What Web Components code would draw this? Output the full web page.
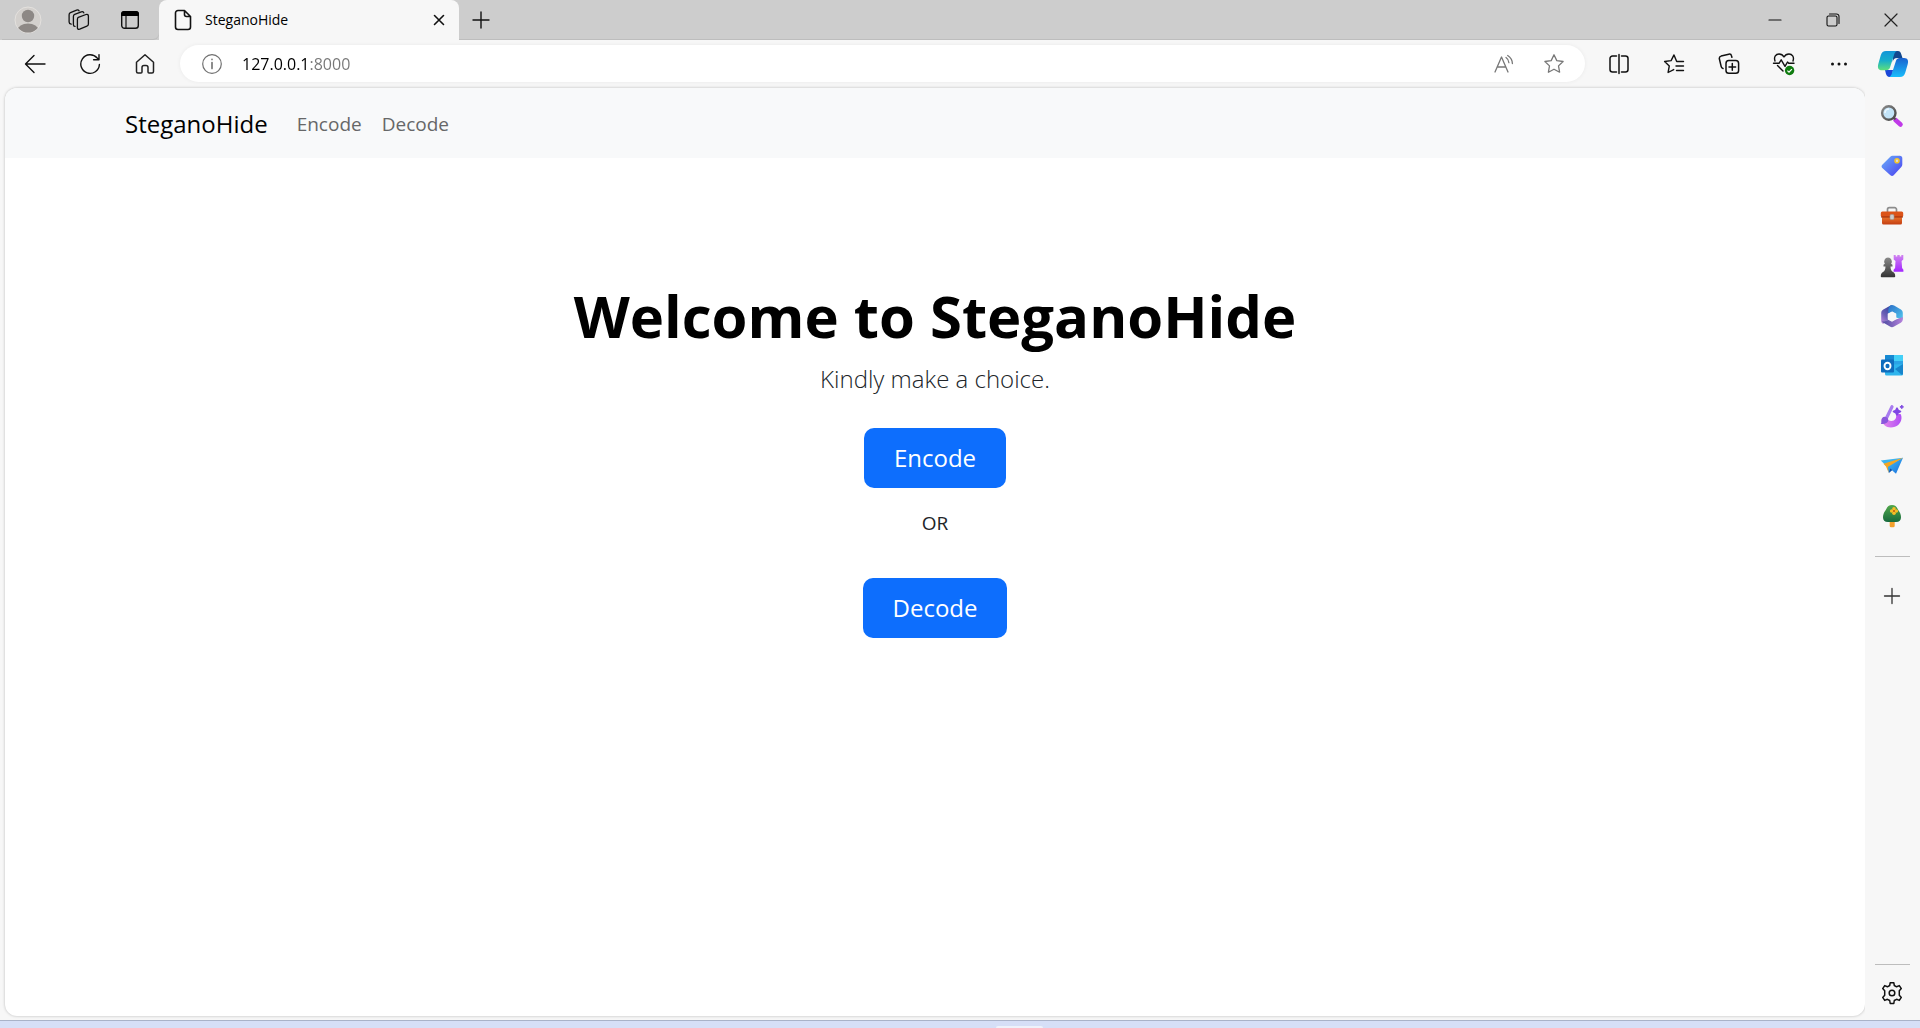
<!DOCTYPE html>
<html lang="en">
<head>
<meta charset="utf-8">
<title>SteganoHide</title>
<style>
html, body { margin: 0; height: 100%; }
body { font-family: "Open Sans", "Noto Sans", sans-serif; color: #000; background: #f7f7f7; }
</style>
</head>
<body>
<browser-window>
  <tab-strip slot="tabs" label="SteganoHide"></tab-strip>
  <tool-bar slot="tools"></tool-bar>
  <site-page slot="page">
    <site-nav slot="nav" brand="SteganoHide">
      <a href="#encode">Encode</a>
      <a href="#decode">Decode</a>
    </site-nav>
    <welcome-panel>
      <span slot="title">Welcome to SteganoHide</span>
      <span slot="lead">Kindly make a choice.</span>
      <action-button slot="first">Encode</action-button>
      <span slot="or">OR</span>
      <action-button slot="second">Decode</action-button>
    </welcome-panel>
  </site-page>
  <side-bar slot="side"></side-bar>
</browser-window>

<script>
const line = (w, body, sw = 1.4, color = '#111') =>
  [w, `<g fill="none" stroke="${color}" stroke-width="${sw}" stroke-linecap="round" stroke-linejoin="round">${body}</g>`];
const full = (w, body) => [w, body];

/* Each glyph: [size in px, markup]; the viewBox equals the size. */
const ICONS = {
  avatar: full(28, `<defs><clipPath id="c"><circle cx="14" cy="14" r="12.6"/></clipPath></defs><circle cx="14" cy="14" r="13" fill="#d3d0cd" stroke="#e4e1de"/><g fill="#8d8885" clip-path="url(#c)"><circle cx="14" cy="10" r="6.2"/><ellipse cx="14" cy="24" rx="10.4" ry="6.4"/></g>`),
  spaces: line(24, `<path d="M11.300 9.400l7.700-2.900c1.400-.4 2.400.3 2.400 1.600v8c0 1-.5 1.800-1.500 2.100l-7.200 3c-1.300.4-2.300-.2-2.300-1.500v-8.300c0-1 .2-1.600.9-2z"/><path d="M8 18.400c-1 0-1.600-.6-1.600-1.600V8.400c0-1 .4-1.700 1.300-2.100l6.600-2.500c1.100-.3 2 0 2.500 1"/><path d="M4.200 16.200c-1.300-.2-2.100-1-2.100-2.200V6.700c0-1 .5-1.700 1.400-2.100L9.600 2.100c1-.3 2 0 2.500.8"/>`, 1.3),
  tabsmenu: full(20, `<rect x="1.700" y="1.700" width="16.600" height="16.600" rx="2.800" fill="none" stroke="#111" stroke-width="1.400"/><path d="M1 6V4a3 3 0 0 1 3-3h12a3 3 0 0 1 3 3v2z" fill="#000"/><path d="M6 6v12" stroke="#111" stroke-width="1.200"/>`),
  file: line(22, `<path d="M12.500 1.500H6A2.500 2.500 0 0 0 3.500 4v14A2.500 2.500 0 0 0 6 20.500h10a2.500 2.500 0 0 0 2.500-2.500V7.500zM12.500 1.500v4a2 2 0 0 0 2 2h4"/>`, 1.6),
  x: line(14, `<path d="M2.500 2.500l9 9M11.500 2.500l-9 9"/>`, 1.6),
  plus: line(20, `<path d="M10 2v16M2 10h16"/>`, 1.4),
  min: line(14, `<path d="M1 7h12"/>`, 1.2),
  max: line(14, `<rect x="1" y="3" width="10" height="10" rx="1.500"/><path d="M3.500 1H10.500A2.500 2.500 0 0 1 13 3.500V10.500"/>`, 1.1),
  close: line(14, `<path d="M1 1l12 12M13 1L1 13"/>`, 1.2, '#222'),
  back: line(22, `<path d="M21 11H2M10 2.500L1.500 11l8.500 8.500"/>`, 1.4),
  reload: line(22, `<path d="M20.400 11.500A9.300 9.300 0 1 1 18.200 5l1.600 1.500M20 1.600v5.200h-5.400"/>`, 1.4),
  home: line(22, `<path d="M2.500 9.200L11 1.800l8.500 7.400v9.300a1.500 1.500 0 0 1-1.500 1.500h-3a1 1 0 0 1-1-1v-4.500a2 2 0 0 0-2-2h-2a2 2 0 0 0-2 2V19a1 1 0 0 1-1 1H4a1.500 1.500 0 0 1-1.500-1.500z"/>`, 1.5, '#222'),
  info: line(22, `<circle cx="11" cy="11" r="9.300"/><path d="M11 9.600v6M11 6.400v.2" stroke-width="1.600"/>`, 1.2, '#707070'),
  read: line(22, `<path d="M2 19L8.500 4 15 19M4.300 14h8.400"/><path d="M13 4.500c1.800 1.200 2.800 3 2.900 5.200M14.700 2.500c3 2 4.600 4.600 4.700 8"/>`, 1.3, '#777'),
  star: line(22, `<path d="M11 1.800l2.800 5.800 6.300.9-4.600 4.400 1.100 6.300L11 16.200l-5.600 3 1.100-6.300L1.900 8.500l6.300-.9z"/>`, 1.3, '#777'),
  split: line(22, `<path d="M8.500 3H4.500A2.500 2.500 0 0 0 2 5.500v11A2.500 2.500 0 0 0 4.500 19h4M13.500 3h4A2.500 2.500 0 0 1 20 5.500v11a2.500 2.500 0 0 1-2.500 2.500h-4M11 1.500v19"/>`, 1.5),
  favs: line(22, `<path d="M20.500 8.500h-6.800L11 1.900 8.100 7.600l-6.500.9 4.700 4.400-1.200 6.600 5.600-2.900M13 13h7.500M13.500 17.500h7"/>`, 1.4),
  collect: line(22, `<rect x="8" y="7.600" width="12.600" height="12.600" rx="2.800"/><path d="M14.300 10.600v6.600M11 13.900h6.600M5 15.500c-1-.2-1.600-.8-1.800-1.800L1.400 6c-.3-1.400.4-2.500 1.700-2.900l7.700-1.900c1.300-.3 2.400.4 2.700 1.600l.4 1.400"/>`, 1.5),
  health: full(24, `<g fill="none" stroke="#111" stroke-width="1.400" stroke-linecap="round" stroke-linejoin="round"><path d="M3 9C1.500 4.500 4 2 7 2c2.300 0 4 1.200 5 3 1-1.800 2.700-3 5-3 3 0 5.500 2.500 4 7M5.500 13.500l5.500 5.500M1.500 11.300H7l2.200-3.500 3.800 6.500 2.500-4.300 1.200 1.300h5.300"/></g><circle cx="17.600" cy="18.500" r="4.700" fill="#107c10"/><path d="M15.400 18.600l1.600 1.500 2.900-3" fill="none" stroke="#fff" stroke-width="1.200"/>`),
  dots: full(18, `<g fill="#111"><circle cx="2.500" cy="9" r="1.500"/><circle cx="9" cy="9" r="1.500"/><circle cx="15.500" cy="9" r="1.500"/></g>`),
  copilot: full(32, `<defs><linearGradient id="a" x1="0" y1="0" x2="0" y2="1"><stop offset="0" stop-color="#1295d8"/><stop offset=".5" stop-color="#18aecb"/><stop offset="1" stop-color="#5fe07b"/></linearGradient><linearGradient id="b" x1="0" y1="0" x2="0" y2="1"><stop offset="0" stop-color="#1a62cf"/><stop offset="1" stop-color="#19bdfb"/></linearGradient></defs><path d="M16 3h5c1.600 0 2.700 1 3.200 3l1.300 4h-5.200c-3 0-4 1.200-4.600 4z" fill="#12488f"/><path d="M8 22h8l-1 7h-2.500c-2 0-3-1.500-3.600-3.500z" fill="#1b47d8"/><path d="M9 3h11c-1.600.5-2.400 2-3 4l-4 12.500c-.6 1.800-2 2.800-3.600 2.800H5c-4 0-4.600-3-3.700-6.300l2.400-8.500C4.600 4.400 6.300 3 9 3z" fill="url(#a)"/><path d="M23 29H12c1.600-.5 2.400-2 3-4l4-12.300c.6-1.800 2-2.700 3.600-2.700H27c4 0 4.600 3 3.700 6.300l-2.400 8.200C27.400 27.600 25.700 29 23 29z" fill="url(#b)"/>`),
  search: full(24, `<defs><linearGradient id="a" x1="0" y1="0" x2="1" y2="1"><stop offset="0" stop-color="#8a8a8a"/><stop offset="1" stop-color="#444"/></linearGradient></defs><path d="M15.500 16l5 4.500" stroke="#c03ae8" stroke-width="4.600" stroke-linecap="round"/><path d="M13.500 13.500l2 2" stroke="#555" stroke-width="2"/><circle cx="8.800" cy="9" r="6.700" fill="#c3e4f8" stroke="url(#a)" stroke-width="2.400"/><path d="M5 9a4 4 0 0 1 4-4" stroke="#eef8ff" stroke-width="1.500" fill="none"/>`),
  tag: full(24, `<defs><linearGradient id="a" x1="0" y1="0" x2="1" y2="1"><stop offset="0" stop-color="#6bb1f8"/><stop offset="1" stop-color="#4a3df0"/></linearGradient></defs><path d="M12.500 1.700h7.300a2.500 2.500 0 0 1 2.500 2.500v6.300c0 1-.3 1.800-1 2.500l-7.600 8.200c-1 1-2.300 1-3.300 0L2.300 14c-1-1-1-2.300 0-3.300l8-8c.6-.6 1.300-1 2.200-1z" fill="url(#a)"/><circle cx="17" cy="6.700" r="2" fill="#ddd" stroke="#f5c52a" stroke-width="1.600"/>`),
  toolbox: full(24, `<defs><linearGradient id="a" x1="0" y1="0" x2="0" y2="1"><stop offset="0" stop-color="#f07a2e"/><stop offset="1" stop-color="#c33e12"/></linearGradient></defs><path d="M7.500 8V5.500A1.800 1.800 0 0 1 9.300 3.700h5.400a1.800 1.800 0 0 1 1.800 1.800V8" fill="none" stroke="#8c8c8c" stroke-width="1.700"/><rect x="2" y="12" width="20" height="8.500" rx="1.500" fill="url(#a)"/><rect x=".8" y="7.500" width="22.400" height="5.500" rx="1.500" fill="#dc5318"/><path d="M1 13h22" stroke="#982a0b"/><rect x="10" y="10.500" width="4" height="5" rx="1.300" fill="#ccc" stroke="#999" stroke-width=".6"/>`),
  games: full(24, `<defs><linearGradient id="a" x1="0" y1="0" x2="0" y2="1"><stop offset="0" stop-color="#8a8a8a"/><stop offset="1" stop-color="#333"/></linearGradient><linearGradient id="b" x1="0" y1="0" x2="0" y2="1"><stop offset="0" stop-color="#d084f0"/><stop offset="1" stop-color="#a427ff"/></linearGradient></defs><path d="M13.700 1h2v1.600h1.600V1h2.400v1.600h1.600V1h2v4.500L21.600 7l.5 7 1.300 1.800v1.900h-9.800v-2l1.500-1.700.4-7-1.800-1.500z" fill="url(#b)"/><path d="M8 3.500a4 4 0 0 1 3.100 6.300l1.400 1v1.600h-2c.1 3 .8 4.300 2.600 5.700 1.600 1 2.100 2 2.100 4.400a.8.800 0 0 1-.8.800H1.600a.8.800 0 0 1-.8-.8c0-2.400.6-3.400 2.200-4.400 1.700-1.400 2.400-2.700 2.500-5.700h-2v-1.600l1.400-1A4 4 0 0 1 8 3.500z" fill="url(#a)"/>`),
  m365: full(24, `<defs><linearGradient id="a" x1="0" y1="1" x2=".6" y2="0"><stop offset="0" stop-color="#c58fe2"/><stop offset=".5" stop-color="#6a5fb5"/><stop offset="1" stop-color="#3a45a0"/></linearGradient><linearGradient id="b" x1="0" y1="0" x2="1" y2="1"><stop offset="0" stop-color="#2b6fc8"/><stop offset="1" stop-color="#52c8ee"/></linearGradient><linearGradient id="d" x1="0" y1="0" x2="1" y2="0"><stop offset="0" stop-color="#4a4a9f"/><stop offset="1" stop-color="#b683dc"/></linearGradient></defs><path d="M11 1.200L3.300 5.600C1.900 6.400 1.200 7.600 1.200 9.200v7.600c0 1.500.7 2.500 1.900 3.200L8 15.600V9.800l4-2.400z" fill="url(#a)"/><path d="M10.500 1.500c1.200-.6 2.500-.5 3.600.1l6.800 4c1.300.8 1.900 1.900 1.900 3.500v6.500L16 13.600V9.800l-4-2.400-3.400 2.100c-.8-3.600-.3-6.600 1.900-8z" fill="url(#b)"/><path d="M22.800 13v2.200c0 1.500-.7 2.700-2 3.500l-6.700 3.900c-1.400.8-2.800.8-4.200 0l-6.800-4-1.300-1.400c2 .7 4.200.2 6.200-1.500l4 2.100 4-2.400z" fill="url(#d)"/><path d="M12 7.400l4.300 2.400v5L12 17.300l-4.300-2.500v-5z" fill="#f7f7f7"/>`),
  outlook: full(24, `<rect x="5" y="1" width="18" height="12" rx="1" fill="#2ba3e6"/><path d="M14 1h8a1 1 0 0 1 1 1v5h-9z" fill="#43d0f7"/><path d="M5 2a1 1 0 0 1 1-1h8v6H5z" fill="#1689d2"/><path d="M5 11l18-1v10a1.500 1.500 0 0 1-1.500 1.500h-15A1.500 1.500 0 0 1 5 20z" fill="#2fb5ed"/><path d="M23 10l-8 5 7 6 1-1z" fill="#1785cc"/><rect x="1" y="5.500" width="13" height="13" rx="1" fill="#0f6cbd"/><ellipse cx="7.500" cy="12" rx="3" ry="3.300" fill="none" stroke="#fff" stroke-width="1.900"/>`),
  designer: full(24, `<defs><linearGradient id="a" x1="0" y1="0" x2="1" y2="0"><stop offset="0" stop-color="#e88bea"/><stop offset="1" stop-color="#b04df5"/></linearGradient></defs><path d="M1.500 15.500c.6 4.500 4.500 8 9.300 8 6 0 10.200-4 10.700-9.300.1-1.600-.2-3-.9-4.200h-4.800c1.400 4-1 7-4.300 7-2.500 0-4.300-1.500-4.700-4.500z" fill="url(#a)"/><path d="M5.500 16L12 2.700" stroke="#a87cf0" stroke-width="3.200" stroke-linecap="round"/><path d="M4.500 12.800c2.300 0 4 1.700 3.700 3.700-.3 2.500-3.200 4-7.400 3.500.9-1 .3-2 .6-3.800.3-2 1.300-3.400 3.100-3.400z" fill="#8a57dc"/><path d="M17 4.200l1.200 2.200 2.300 1.100-2.300 1.200-1.200 2.200-1.200-2.200-2.300-1.200 2.300-1.100z" fill="#8046e4" stroke="#8046e4" stroke-width="1.600" stroke-linejoin="round"/><path d="M21.800 1l.6 1.300 1.200.6-1.200.6-.6 1.300-.6-1.300-1.300-.6 1.300-.6z" fill="#7b43e0" stroke="#7b43e0" stroke-width=".8"/>`),
  drop: full(24, `<defs><linearGradient id="a" x1="0" y1="0" x2="1" y2="1"><stop offset="0" stop-color="#45c5f5"/><stop offset="1" stop-color="#1769dd"/></linearGradient></defs><path d="M.8 6.500L23 3.800 7.500 13z" fill="#3db3ee"/><path d="M23 3.800L16 19.800l-4-3.600-3.300 2.600L7 12.600z" fill="url(#a)"/><path d="M23 3.800L7.800 13l1 6L6 12.500 3.400 9.700z" fill="#f5a623"/><path d="M8.800 19l3.400-3-2-1.600z" fill="#1350a8"/>`),
  tree: full(24, `<defs><linearGradient id="a" x1="0" y1="0" x2="0" y2="1"><stop offset="0" stop-color="#52a84b"/><stop offset="1" stop-color="#176a3d"/></linearGradient></defs><rect x="9.700" y="16" width="5" height="7.300" rx="1.500" fill="#f3a02c"/><path d="M12 1c3 0 4.500 1.500 5.700 4 .6 1.300 1.800 2.500 2.500 4.200 1.800 4.800.7 8.800-4.200 8.800H8c-4.900 0-6-4-4.200-8.800C4.500 7.500 5.700 6.300 6.300 5 7.500 2.500 9 1 12 1z" fill="url(#a)"/><g fill="#f8bd26"><circle cx="14" cy="4.700" r="1.800"/><circle cx="14" cy="9.300" r="1.800"/><circle cx="11.700" cy="7" r="1.800"/><circle cx="16.300" cy="7" r="1.800"/></g><circle cx="14" cy="7" r="1.100" fill="#d36412"/>`),
  sideplus: line(18, `<path d="M9 1.500v15M1.500 9h15"/>`, 1.3, '#333'),
  gear: line(24, `<path d="M9.700 4.500l.5-2.800h3.600l.5 2.800 2.300 1.300 2.700-1.200 2 3-2 2.200v4.400l2 2.200-2 3-2.700-1.100-2.300 1.200-.5 3h-3.600l-.5-3-2.300-1.200-2.700 1.100-2-3 2-2.200V9.800l-2-2.200 2-3 2.700 1.200z"/><circle cx="12" cy="12" r="2.800"/>`, 1.5)
};

function define(name, html, init) {
  const tpl = document.createElement('template');
  tpl.innerHTML = html;
  customElements.define(name, class extends HTMLElement {
    connectedCallback() {
      if (this.shadowRoot) return;
      this.attachShadow({ mode: 'open' }).append(tpl.content.cloneNode(true));
      if (init) init(this, this.shadowRoot);
    }
  });
}

define('ui-icon', `<style>:host{display:flex}svg{display:block}</style>`, (el, root) => {
  const [size, body] = ICONS[el.getAttribute('name')];
  root.innerHTML += `<svg width="${size}" height="${size}" viewBox="0 0 ${size} ${size}" aria-hidden="true">${body}</svg>`;
});

/* Icon-only button; the host sets the cell size. */
define('icon-button', `<style>
  :host{display:flex;flex:none}
  button{all:unset;flex:1;display:flex;align-items:center;justify-content:center;cursor:pointer}
  </style><button type="button"></button>`, (el, root) => {
  const b = root.querySelector('button');
  b.setAttribute('aria-label', el.getAttribute('label'));
  b.innerHTML = `<ui-icon name="${el.getAttribute('icon')}"></ui-icon>`;
});

define('browser-window', `<style>
  :host{display:flex;flex-direction:column;height:100vh}
  main{flex:1;min-height:0;display:flex;padding-left:5px}
  .page{flex:1;display:flex;padding-bottom:4px}
  .page ::slotted(*){flex:1}
  footer{flex:none;height:8px;box-sizing:border-box;border-top:1px solid #a9b2c8;background:#d6dff7;display:flex;justify-content:center;align-items:flex-end}
  footer i{width:47px;height:2px;margin-left:118px;background:#eef2fb;border-radius:4px 4px 0 0}
  </style>
  <slot name="tabs"></slot><slot name="tools"></slot>
  <main><div class="page"><slot name="page"></slot></div><slot name="side"></slot></main>
  <footer><i></i></footer>`);

define('tab-strip', `<style>
  :host{display:flex;flex:none;height:40px;background:#cdcdcd;padding-left:2px}
  icon-button{width:51px}
  .left,.right{display:flex;box-shadow:inset 0 -1px #bdbdbd}
  .left{padding-right:4px;border-radius:0 0 6px 0}
  .tab{width:300px;box-sizing:border-box;display:flex;align-items:center;background:#f7f7f7;border-radius:8px 8px 0 0;padding:0 6px 0 13px;font-size:14px;line-height:20px}
  .tab span{flex:1;padding-left:11px}
  .tab icon-button{width:29px;height:29px}
  .right{flex:1;justify-content:space-between}
  .right .add{width:43px}
  .win{display:flex}
  .win icon-button{width:58px}
  </style>
  <div class="left">
    <icon-button icon="avatar" label="Profile"></icon-button>
    <icon-button icon="spaces" label="Workspaces"></icon-button>
    <icon-button icon="tabsmenu" label="Tab actions menu"></icon-button>
  </div>
  <div class="tab"><ui-icon name="file"></ui-icon><span></span><icon-button icon="x" label="Close tab"></icon-button></div>
  <div class="right"><icon-button class="add" icon="plus" label="New tab"></icon-button>
    <div class="win">
      <icon-button icon="min" label="Minimize"></icon-button>
      <icon-button icon="max" label="Restore"></icon-button>
      <icon-button icon="close" label="Close"></icon-button>
    </div>
  </div>`, (el, root) => { root.querySelector('.tab span').textContent = el.getAttribute('label'); });

define('tool-bar', `<style>
  :host{display:flex;flex:none;height:48px;box-sizing:border-box;padding-left:7px;background:#f7f7f7}
  icon-button{width:55px}
  .last{width:54px}
  .address{flex:1;display:flex;align-items:center;height:37px;box-sizing:border-box;margin:5px 6px 0 8px;padding:0 6px 0 21px;background:#fff;border-radius:19px;box-shadow:0 0 4px #0000000f}
  .address icon-button{width:50px;height:36px}
  input{flex:1;min-width:0;border:0;outline:0;margin:0;padding:0 0 0 19px;height:26px;font:16px/26px "Open Sans","Noto Sans",sans-serif;color:#000;
    background:linear-gradient(90deg,#000 var(--host-end),#767676 var(--host-end));-webkit-background-clip:text;background-clip:text;-webkit-text-fill-color:transparent;--host-end:87px}
  </style>
  <icon-button icon="back" label="Back"></icon-button>
  <icon-button icon="reload" label="Refresh"></icon-button>
  <icon-button icon="home" label="Home"></icon-button>
  <div class="address"><ui-icon name="info"></ui-icon>
    <input type="text" aria-label="Address" value="127.0.0.1:8000" spellcheck="false">
    <icon-button icon="read" label="Read aloud"></icon-button>
    <icon-button icon="star" label="Add to favorites"></icon-button>
  </div>
  <icon-button icon="split" label="Split screen"></icon-button>
  <icon-button icon="favs" label="Favorites"></icon-button>
  <icon-button icon="collect" label="Collections"></icon-button>
  <icon-button icon="health" label="Browser essentials"></icon-button>
  <icon-button icon="dots" label="Settings and more"></icon-button>
  <icon-button class="last" icon="copilot" label="Copilot"></icon-button>`);

define('side-bar', `<style>
  :host{display:flex;flex-direction:column;flex:none;width:55px;box-sizing:border-box;padding:3px 1px 2px 0;background:#f7f7f7}
  icon-button{height:50px}
  hr{width:35px;height:1px;border:0;background:#bdbdbd;margin:0 auto}
  .mid{margin-top:15px;margin-bottom:14px}
  .end{margin-top:auto;margin-bottom:3px}
  </style>
  <icon-button icon="search" label="Search"></icon-button>
  <icon-button icon="tag" label="Shopping"></icon-button>
  <icon-button icon="toolbox" label="Tools"></icon-button>
  <icon-button icon="games" label="Games"></icon-button>
  <icon-button icon="m365" label="Microsoft 365"></icon-button>
  <icon-button icon="outlook" label="Outlook"></icon-button>
  <icon-button icon="designer" label="Designer"></icon-button>
  <icon-button icon="drop" label="Drop"></icon-button>
  <icon-button icon="tree" label="E-tree"></icon-button>
  <hr class="mid">
  <icon-button icon="sideplus" label="Customize sidebar"></icon-button>
  <hr class="end">
  <icon-button icon="gear" label="Settings"></icon-button>`);

define('site-page', `<style>
  :host{display:block;background:#fff;border-radius:12px;overflow:hidden;box-shadow:0 0 3px #00000040;color:#212529}
  </style><slot name="nav"></slot><slot></slot>`);

define('site-nav', `<style>
  :host{display:block;background:#f8f9fa}
  nav{max-width:1650px;margin:0 auto;box-sizing:border-box;height:70px;padding:2px 15px 0;display:flex;align-items:center}
  .brand{font-size:24px;line-height:38px;color:#000;text-decoration:none;margin-right:19px}
  ::slotted(a){font-size:19px;line-height:30px;padding:0 10px;color:#666768;text-decoration:none}
  </style><nav><a class="brand" href="#"></a><slot></slot></nav>`, (el, root) => {
  root.querySelector('.brand').textContent = el.getAttribute('brand');
});

define('welcome-panel', `<style>
  :host{display:flex;flex-direction:column;align-items:center;padding-top:122px}
  h1{margin:0 0 8px;font-size:58px;line-height:72px;font-weight:700;color:#000}
  .lead{margin:0 0 30px;font-size:24px;line-height:38px;font-weight:300}
  .or{margin:20px 0 40px;font-size:19px;line-height:30px}
  </style>
  <h1><slot name="title"></slot></h1>
  <p class="lead"><slot name="lead"></slot></p>
  <slot name="first"></slot>
  <p class="or"><slot name="or"></slot></p>
  <slot name="second"></slot>`);

define('action-button', `<style>
  :host{display:block}
  button{display:block;height:60px;border:0;border-radius:10px;background:#0d6efd;color:#fff;padding:0 30px;font:24px/38px "Open Sans","Noto Sans",sans-serif;cursor:pointer}
  </style><button type="button"><slot></slot></button>`);
</script>
</body>
</html>
